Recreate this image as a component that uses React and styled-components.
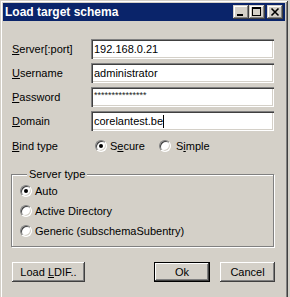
import React from 'react';
import styled, { createGlobalStyle } from 'styled-components';

const GlobalStyle = createGlobalStyle`
  html, body {
    margin: 0;
    padding: 0;
    background: #d4d0c8;
    overflow: hidden;
  }
  body {
    font-family: "Liberation Sans", Arial, sans-serif;
    font-size: 11px;
    color: #000;
  }
`;

const Window = styled.div`
  width: 288px;
  height: 300px;
  box-sizing: border-box;
  padding: 3px;
  background: #d4d0c8;
  box-shadow: inset 1px 1px #d4d0c8, inset -1px -1px #404040,
    inset 2px 2px #fff, inset -2px -2px #808080;
  display: flex;
  flex-direction: column;
`;

const TitleBar = styled.div`
  height: 18px;
  background: #0a246a;
  color: #fff;
  font-weight: bold;
  font-size: 12px;
  display: flex;
  align-items: center;
  padding: 0 2px 0 2px;
`;

const Title = styled.span`
  flex: 1;
  line-height: 18px;
`;

const TitleButton = styled.div`
  width: 16px;
  height: 14px;
  background: #d4d0c8;
  box-shadow: inset -1px -1px #404040, inset 1px 1px #d4d0c8,
    inset -2px -2px #808080, inset 2px 2px #fff;
  margin-left: ${(p) => (p.$gap ? '2px' : '0')};
  svg {
    display: block;
  }
`;

const Body = styled.div`
  padding: 18px 11px 0 9px;
  display: flex;
  flex-direction: column;
`;

const Form = styled.div`
  display: grid;
  grid-template-columns: 79px 1fr;
  grid-template-rows: repeat(4, 20px) 22px;
  row-gap: 4px;
  align-items: center;
`;

const Label = styled.div`
  line-height: 13px;
  white-space: nowrap;
`;

const Field = styled.div`
  height: 20px;
  box-sizing: border-box;
  background: #fff;
  box-shadow: inset 1px 1px #808080, inset 2px 2px #404040,
    inset -1px -1px #fff, inset -2px -2px #d4d0c8;
  padding: 0 3px;
  display: flex;
  align-items: center;
  white-space: nowrap;
  overflow: hidden;
`;

const Stars = styled.span`
  font-size: 9px;
  color: #222;
  margin-top: -5px;
`;

const Caret = styled.span`
  display: inline-block;
  width: 1px;
  height: 13px;
  background: #000;
`;

const RadioRow = styled.div`
  display: flex;
  padding-left: 4px;
`;

const Option = styled.label`
  display: flex;
  align-items: center;
  gap: ${(p) => p.$gap || '3px'};
  width: ${(p) => p.$width || 'auto'};
  height: 20px;
  line-height: 13px;
  white-space: nowrap;
`;

const Radio = styled.span`
  width: 12px;
  height: 12px;
  box-sizing: border-box;
  border-radius: 50%;
  background: #fff;
  border: 1px solid;
  border-color: #808080 #fff #fff #808080;
  box-shadow: inset 1px 1px #404040, inset -1px -1px #d4d0c8;
  display: flex;
  align-items: center;
  justify-content: center;
  flex: none;
  &::after {
    content: '';
    width: 4px;
    height: 4px;
    border-radius: 50%;
    background: #000;
    display: ${(p) => (p.$checked ? 'block' : 'none')};
  }
`;

const Group = styled.fieldset`
  margin: 11px 0 0 -1px;
  padding: 0 8px 5px 8px;
  border: 1px solid #808080;
  box-shadow: inset 1px 1px #fff, 1px 1px #fff;
  display: flex;
  flex-direction: column;
  min-width: 0;
`;

const Legend = styled.legend`
  margin-left: 7px;
  padding: 0 2px;
  line-height: 13px;
  background: #d4d0c8;
`;

const Buttons = styled.div`
  display: flex;
  margin-top: 15px;
  margin-right: -1px;
`;

const Button = styled.button`
  width: ${(p) => p.$width};
  height: 20px;
  margin-left: ${(p) => p.$left || '0'};
  padding: 0;
  background: #d4d0c8;
  font: 11px "Liberation Sans", Arial, sans-serif;
  color: #000;
  border: ${(p) => (p.$default ? '1px solid #000' : 'none')};
  box-sizing: border-box;
  box-shadow: inset -1px -1px #404040, inset 1px 1px #fff,
    inset -2px -2px #808080, inset 2px 2px #d4d0c8;
`;

function App() {
  return (
    <>
      <GlobalStyle />
      <Window>
        <TitleBar>
          <Title>Load target schema</Title>
          <TitleButton>
            <svg width="16" height="14" shapeRendering="crispEdges">
              <rect x="4" y="9" width="6" height="2" fill="#000" />
            </svg>
          </TitleButton>
          <TitleButton>
            <svg width="16" height="14" shapeRendering="crispEdges">
              <rect x="3.5" y="2.5" width="8" height="8" fill="none" stroke="#000" />
              <rect x="3" y="3" width="9" height="1" fill="#000" />
            </svg>
          </TitleButton>
          <TitleButton $gap>
            <svg width="16" height="14">
              <path d="M4.5 3.5 L11.5 10.5 M11.5 3.5 L4.5 10.5" stroke="#000" strokeWidth="1.6" />
            </svg>
          </TitleButton>
        </TitleBar>
        <Body>
          <Form>
            <Label><u>S</u>erver[:port]</Label>
            <Field>192.168.0.21</Field>
            <Label><u>U</u>sername</Label>
            <Field>administrator</Field>
            <Label><u>P</u>assword</Label>
            <Field><Stars>***************</Stars></Field>
            <Label><u>D</u>omain</Label>
            <Field>corelantest.be<Caret /></Field>
            <Label><u>B</u>ind type</Label>
            <RadioRow>
              <Option $width="64px">
                <Radio $checked />
                <span>S<u>e</u>cure</span>
              </Option>
              <Option $gap="5px">
                <Radio />
                <span>S<u>i</u>mple</span>
              </Option>
            </RadioRow>
          </Form>
          <Group>
            <Legend>Server type</Legend>
            <Option><Radio $checked /><span>Auto</span></Option>
            <Option><Radio /><span>Active Directory</span></Option>
            <Option><Radio /><span>Generic (subschemaSubentry)</span></Option>
          </Group>
          <Buttons>
            <Button $width="73px">Load <u>L</u>DIF..</Button>
            <Button $width="56px" $left="auto" $default>Ok</Button>
            <Button $width="55px" $left="10px">Cancel</Button>
          </Buttons>
        </Body>
      </Window>
    </>
  );
}

export default App;
